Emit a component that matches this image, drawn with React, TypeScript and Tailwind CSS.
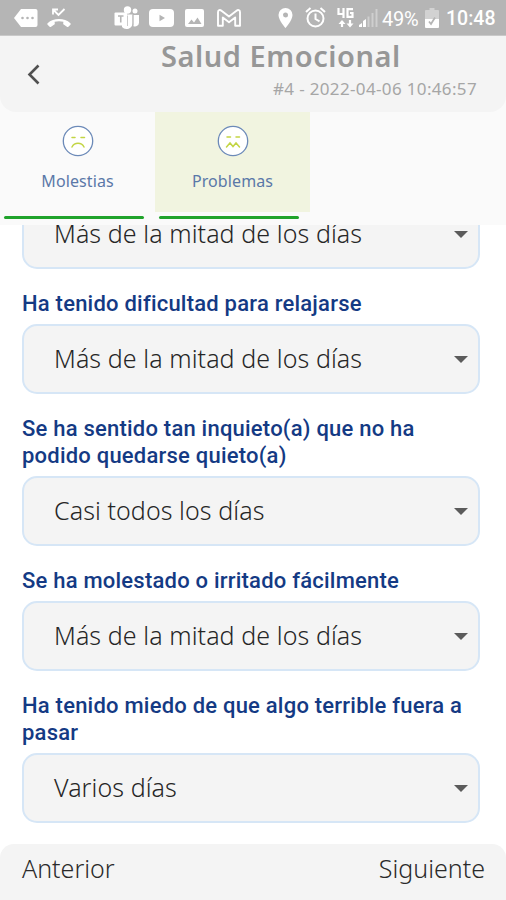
import { ReactNode } from "react";

type IconProps = { className?: string };

const QUESTIONS = [
  {
    id: "worry",
    title: "",
    answer: "Más de la mitad de los días",
  },
  {
    id: "relax",
    title: "Ha tenido dificultad para relajarse",
    answer: "Más de la mitad de los días",
  },
  {
    id: "restless",
    title: "Se ha sentido tan inquieto(a) que no ha podido quedarse quieto(a)",
    answer: "Casi todos los días",
  },
  {
    id: "annoyed",
    title: "Se ha molestado o irritado fácilmente",
    answer: "Más de la mitad de los días",
  },
  {
    id: "afraid",
    title: "Ha tenido miedo de que algo terrible fuera a pasar",
    answer: "Varios días",
  },
];

const MessageIcon = ({ className }: IconProps) => (
  <svg className={className} width="24" height="18" viewBox="0 0 24 18">
    <path d="M7 0h14.500a2 2 0 0 1 2 2v14a2 2 0 0 1-2 2H7L0 9Z" fill="#fff" />
    <circle cx="8.500" cy="9" r="1.300" fill="#b5b5b5" />
    <circle cx="13.500" cy="9" r="1.300" fill="#b5b5b5" />
    <circle cx="18.500" cy="9" r="1.300" fill="#b5b5b5" />
  </svg>
);

const MissedCallIcon = ({ className }: IconProps) => (
  <svg className={className} width="24" height="20" viewBox="0 0 24 20">
    <path
      d="M.6 15.200C6.500 9.600 17.500 9.600 23.400 15.200c.5.500.5 1 0 1.500l-2 2c-.5.500-1 .500-1.500.1l-3.200-2.200c-.4-.3-.6-.7-.5-1.200l.2-1.600c-2.800-.9-6-.9-8.800 0l.2 1.600c.1.500-.1.900-.5 1.200l-3.200 2.200c-.5.400-1 .4-1.500-.1l-2-2c-.5-.5-.5-1 0-1.500Z"
      fill="#fff"
    />
    <path d="M6 6.500V1.500h5M6.500 2l5 5 6-6" fill="none" stroke="#fff" strokeWidth="1.800" />
  </svg>
);

const TeamsIcon = ({ className }: IconProps) => (
  <svg className={className} width="26" height="24" viewBox="0 0 26 24">
    <circle cx="13.500" cy="4" r="3.700" fill="#fff" />
    <circle cx="21" cy="5" r="2.500" fill="#fff" />
    <path d="M19.500 9H25v7.500a4 4 0 0 1-5.500 3.700Z" fill="#fff" />
    <path d="M8 8.500h10.500V17a6 6 0 0 1-10.500 4Z" fill="#fff" />
    <rect x=".5" y="6.500" width="12.500" height="13" rx="1" fill="#fff" />
    <path d="M4 10h5.500M6.750 10v6.500" stroke="#b5b5b5" strokeWidth="1.600" />
    <path d="M13.500 9.500V20M18.900 9v10" stroke="#b5b5b5" strokeWidth=".7" />
  </svg>
);

const VideoIcon = ({ className }: IconProps) => (
  <svg className={className} width="25" height="18" viewBox="0 0 25 18">
    <rect width="25" height="18" rx="4" fill="#fff" />
    <path d="m10.500 5.800 5.500 3.200-5.500 3.200Z" fill="#b5b5b5" />
  </svg>
);

const PictureIcon = ({ className }: IconProps) => (
  <svg className={className} width="19" height="18" viewBox="0 0 19 18">
    <rect width="19" height="18" rx="2" fill="#fff" />
    <path d="m3 15 3.500-4.500 2.500 3 3.500-5 4 6.500Z" fill="#b5b5b5" />
  </svg>
);

const MailIcon = ({ className }: IconProps) => (
  <svg className={className} width="24" height="18" viewBox="0 0 24 18">
    <path
      d="M1 16.800V3.200C1 1 3 .5 4.500 1.700L12 7.500l7.500-5.800C21 .5 23 1 23 3.200v13.600h-4.800V8.500L12 13.200 5.800 8.500v8.300Z"
      fill="none"
      stroke="#fff"
      strokeWidth="1.900"
      strokeLinejoin="round"
    />
  </svg>
);

const PinIcon = ({ className }: IconProps) => (
  <svg className={className} width="15" height="20" viewBox="0 0 15 20">
    <path
      fillRule="evenodd"
      d="M7.500 0A7 7 0 0 0 .5 7c0 5.200 7 13 7 13s7-7.800 7-13a7 7 0 0 0-7-7Zm0 4.500a2.500 2.500 0 1 1 0 5 2.500 2.500 0 0 1 0-5Z"
      fill="#fff"
    />
  </svg>
);

const AlarmIcon = ({ className }: IconProps) => (
  <svg
    className={className}
    width="21"
    height="21"
    viewBox="0 0 21 21"
    fill="none"
    stroke="#fff"
    strokeWidth="2"
  >
    <circle cx="10.500" cy="11.500" r="8" />
    <path d="M10.500 6.500v5.500l4 2.300M1 5l4.500-4M20 5l-4.500-4" />
  </svg>
);

const SignalIcon = ({ className }: IconProps) => (
  <svg className={className} width="19" height="18" viewBox="0 0 19 18" fill="#fff">
    <path d="M0 18v-2l3-2v4ZM4 18v-6l3-2v8Z" />
    <path d="M8.500 7.500h2V18h-2ZM12.500 4h2v14h-2ZM16.500 0h2v18h-2Z" opacity=".35" />
  </svg>
);

const NetworkIcon = ({ className }: IconProps) => (
  <svg className={className} width="17" height="20" viewBox="0 0 17 20" fill="none" stroke="#fff">
    <path d="M1.500 0v6h6M6.500 0v10M16 1.200h-5.500v7.600h5V5H13" strokeWidth="2.200" />
    <path d="M5 19v-6M13 12v6" strokeWidth="2.200" />
    <path d="m1.500 16 3.500-4 3.500 4ZM9.500 15.500l3.500 4 3.500-4Z" fill="#fff" stroke="none" />
  </svg>
);

const BatteryIcon = ({ className }: IconProps) => (
  <svg className={className} width="14" height="20" viewBox="0 0 14 20">
    <path d="M4.500 0h5v2H13a1 1 0 0 1 1 1v8H0V3a1 1 0 0 1 1-1h3.500Z" fill="#fff" opacity=".4" />
    <path d="M0 11h14v8a1 1 0 0 1-1 1H1a1 1 0 0 1-1-1Z" fill="#fff" />
    <path d="M10 9.500 6 16l-2-2.500" fill="none" stroke="#b5b5b5" strokeWidth="1.800" />
  </svg>
);

const FaceIcon = ({ children }: { children: ReactNode }) => (
  <svg width="32" height="32" viewBox="0 0 32 32" fill="none" strokeLinecap="round">
    <circle cx="16" cy="16" r="14.700" fill="#fff" stroke="#6c8ab8" strokeWidth="1.300" />
    <g stroke="#c3d544" strokeWidth="1.500">{children}</g>
  </svg>
);

const StatusBar = () => (
  <div className="flex h-9 shrink-0 items-center border-b border-[#c9c9c9] bg-[#b5b5b5] pl-[14px] font-['Roboto'] text-[19px] text-white">
    <MessageIcon />
    <MissedCallIcon className="ml-[9px]" />
    <TeamsIcon className="ml-[43px]" />
    <VideoIcon className="ml-[9px]" />
    <PictureIcon className="ml-[11px]" />
    <MailIcon className="ml-[13px]" />
    <PinIcon className="ml-[37px]" />
    <AlarmIcon className="ml-[12px]" />
    <NetworkIcon className="ml-[11px]" />
    <SignalIcon className="ml-[5px]" />
    <span className="ml-[4px] w-[43px] pt-[3px] text-[20px] tracking-[-0.2px]">49%</span>
    <BatteryIcon />
    <span className="ml-[7px] pt-[3px] text-[19.500px] font-medium">10:48</span>
  </div>
);

const Header = () => (
  <header className="flex h-[76px] shrink-0 items-start rounded-b-[16px] bg-[#f4f4f4] pl-[27px] pr-[29px]">
    <button className="mt-7" aria-label="Volver">
      <svg width="13" height="21" viewBox="0 0 13 21" fill="none">
        <path d="m11.500 1.500-9 9 9 9" stroke="#505050" strokeWidth="2.600" />
      </svg>
    </button>
    <div className="flex-1">
      <h1 className="ml-[121px] whitespace-nowrap text-[29px] leading-[40px] font-semibold tracking-[0.55px] text-[#979797]">
        Salud Emocional
      </h1>
      <p className="text-right text-[17px] leading-[26px] tracking-[0.35px] text-[#a6a6a6]">
        #4 - 2022-04-06 10:46:57
      </p>
    </div>
  </header>
);

type TabProps = {
  title: string;
  active?: boolean;
  children: ReactNode;
};

const Tab = ({ title, active, children }: TabProps) => (
  <div className="w-[155px]">
    <button
      className={`flex h-[100px] w-full flex-col items-center pt-[13px] ${active ? "bg-[#f1f4e0]" : ""}`}
    >
      <FaceIcon>{children}</FaceIcon>
      <span className="mt-3 text-[16px] leading-6 tracking-[0.1px] text-[#5a78a8]">{title}</span>
    </button>
    <div className="ml-[3.500px] mt-1 h-[3px] w-[140px] rounded-full bg-[#20a32b]" />
  </div>
);

const Select = ({ value }: { value: string }) => (
  <button className="flex h-[70px] w-full items-center justify-between rounded-[15px] border-2 border-[#d6e6f6] bg-[#f4f4f4] pl-[30px] pr-[10px] pb-px text-[25px] font-[350] tracking-[0.08px] text-[#262626]">
    <span className="whitespace-nowrap">{value}</span>
    <svg className="mt-px" width="14" height="7" viewBox="0 0 14 7">
      <path d="M0 0h14L7 7Z" fill="#5b5b5b" />
    </svg>
  </button>
);

const App = () => {
  return (
    <main className="flex h-[900px] w-[506px] flex-col overflow-hidden bg-white font-['Noto_Sans',sans-serif]">
      <StatusBar />
      <div className="shrink-0 bg-[#fafafa]">
        <Header />
        <nav className="flex h-[113px]">
          <Tab title="Molestias">
            <path d="M10 12.500h3M19 12.500h3.500M10 22c2.500-5 9.500-5 12 0" />
          </Tab>
          <Tab title="Problemas" active>
            <path d="M10 12h3.500M19 12h3.500M9.500 22l3.500-4 3 3.500 3-3.500 3.500 4" />
          </Tab>
        </nav>
      </div>
      <section className="min-h-0 flex-1 overflow-hidden pl-[22px] pr-[26px]">
        <div className="-mt-[26px]">
          {QUESTIONS.map((question) => (
            <div key={question.id}>
              {question.title && (
                <h2 className="max-w-[450px] pt-[21px] pb-[7px] font-['Roboto'] text-[22px] leading-[27px] font-medium tracking-[0.22px] text-[#143a84]">
                  {question.title}
                </h2>
              )}
              <Select value={question.answer} />
            </div>
          ))}
        </div>
      </section>
      <footer className="flex h-14 shrink-0 justify-between rounded-t-[14px] bg-[#f4f4f4] pl-[22px] pr-[21px] text-[25px] leading-[48px] font-[350] text-[#2a2a2a]">
        <button className="h-12">Anterior</button>
        <button className="h-12">Siguiente</button>
      </footer>
    </main>
  );
};

export default App;
